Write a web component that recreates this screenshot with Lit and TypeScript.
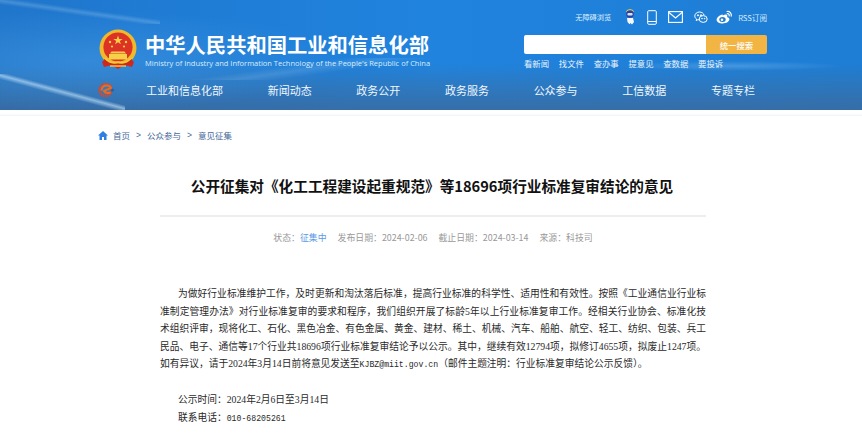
import { LitElement, html, css, svg } from "lit";
import { customElement } from "lit/decorators.js";

const emblem = svg`<svg class="emblem" width="40" height="41" viewBox="0 0 40 41">
  <path d="M9 28 L4 33 L6 38 L14 36 L20 40 L26 36 L34 38 L36 33 L31 28Z" fill="#d0281f"/>
  <circle cx="20" cy="19" r="18.5" fill="#f0b92c"/>
  <circle cx="20" cy="18" r="14.6" fill="#dc3325"/>
  <g fill="#f7d04a">
    <path d="M20 6.500l1.200 3.400h3.500l-2.900 2 1.100 3.400-2.900-2.100-2.900 2.100 1.100-3.400-2.900-2h3.500z"/>
    <circle cx="12" cy="13" r="1.200"/><circle cx="28" cy="13" r="1.200"/>
    <circle cx="14" cy="17.500" r="1.100"/><circle cx="26" cy="17.500" r="1.100"/>
    <path d="M13.500 22.500h13l1.500 2h-16z"/>
    <rect x="11" y="25" width="18" height="5.500"/>
  </g>
  <path d="M6 30 Q20 39 34 30 L34 34 Q20 41 6 34Z" fill="#c92a1e"/>
  <path d="M7 29 Q13 36 20 33 Q27 36 33 29" fill="none" stroke="#f7c93c" stroke-width="1.600"/>
  <path d="M12 37h16" stroke="#f7c93c" stroke-width="1.400"/>
</svg>`;

const eLogo = svg`<svg width="17" height="16" viewBox="0 0 17 16">
  <circle cx="7.500" cy="8" r="6" fill="none" stroke="#e2451f" stroke-width="2.600" stroke-dasharray="1.400 .7"/>
  <path d="M3.500 8.500 Q4 3.500 8.500 3.500 Q12 3.500 13 6 L6 9 Q7.500 12 12.500 10.500" fill="none" stroke="#ef6a1c" stroke-width="2"/>
  <circle cx="14.500" cy="8" r="1.600" fill="#1b62b5"/>
</svg>`;

const robot = svg`<svg width="12" height="16" viewBox="0 0 12 16">
  <path d="M2 3 L3 1 L6 0 L9 1 L10 3Z" fill="#d9cf5c"/>
  <circle cx="6" cy="5" r="3.800" fill="#31409c"/>
  <rect x="3.400" y="4" width="5.200" height="2.600" rx="1" fill="#cfe6ff"/>
  <path d="M3 9h6l1 4-2 2.600-1.500-1.600-1 1.200L3.500 13z" fill="#f4f8ff"/>
</svg>`;
const phone = svg`<svg width="10" height="15" viewBox="0 0 10 15" fill="none" stroke="#fff" stroke-width="1">
  <rect x=".7" y=".7" width="8.600" height="13.600" rx="1"/><path d="M.7 11.500h8.600"/>
</svg>`;
const mail = svg`<svg width="15" height="12" viewBox="0 0 15 12" fill="none" stroke="#fff" stroke-width="1.100">
  <rect x=".6" y=".6" width="13.800" height="10.800"/><path d="M1 1.500 L7.500 7 L14 1.500"/>
</svg>`;
const wechat = svg`<svg width="14" height="13" viewBox="0 0 14 13" fill="none" stroke="#fff" stroke-width="1">
  <path d="M5.500 1C3 1 .8 2.700.8 5c0 1.300.7 2.400 1.800 3.100L2.200 9.600l1.700-.9c.5.1 1 .2 1.600.2"/>
  <path d="M5.500 1c2.200 0 4.100 1.300 4.600 3.100"/>
  <ellipse cx="9.200" cy="8" rx="4" ry="3.400"/>
  <circle cx="4" cy="4.300" r=".6" fill="#fff"/><circle cx="7" cy="4.300" r=".6" fill="#fff"/>
  <circle cx="8" cy="7.600" r=".4" fill="#fff"/><circle cx="10.600" cy="7.600" r=".4" fill="#fff"/>
</svg>`;
const weibo = svg`<svg class="weibo" width="17" height="14" viewBox="0 0 17 14">
  <path fill="#fff" d="M6.700 4.400C3.500 5 .6 7.500.6 9.700c0 2.200 2.800 3.800 6 3.800 3.700 0 6.800-2 6.800-4.200 0-1.400-1.300-1.900-2-2.100-.4-.1-.1-1.100-.1-1.600-.3-1.500-2.500-1.200-4.600-.2z"/>
  <ellipse cx="6.500" cy="9.500" rx="3.200" ry="2.500" fill="#1f79cd"/>
  <circle cx="6" cy="9.800" r="1.300" fill="#fff"/>
  <path d="M11 1.500c2.600-.5 5 1.800 4.200 4.700M11.300 3.700c1.300-.2 2.200.9 1.900 2.100" fill="none" stroke="#fff" stroke-width="1.200" stroke-linecap="round"/>
</svg>`;
const home = svg`<svg width="10" height="9" viewBox="0 0 10 9"><path fill="#2f7fe3" d="M5 0 L10 4.600 H8.500 V9 H6 V6 H4 V9 H1.500 V4.600 H0Z"/></svg>`;

@customElement("app-root")
export class AppRoot extends LitElement {
  static styles = css`
    :host { display: block; width: 862px; height: 441px; overflow: hidden; background: #fff;
      font-family: "Noto Sans CJK SC", "Liberation Sans", sans-serif; }
    .header { height: 110px; color: #fff; display: flex; flex-direction: column; box-sizing: border-box;
      background:
        linear-gradient(15deg, rgba(200,230,250,0) 44%, rgba(200,230,250,.6) 50%, rgba(200,230,250,0) 55%) 0 74px/125px 36px no-repeat,
        linear-gradient(8deg, rgba(200,230,250,0) 42%, rgba(200,230,250,.22) 50%, rgba(200,230,250,0) 58%) 0 0/160px 24px no-repeat,
        linear-gradient(172deg, rgba(200,230,250,0) 42%, rgba(200,230,250,.14) 50%, rgba(200,230,250,0) 58%) 100px 58px/420px 22px no-repeat,
        radial-gradient(ellipse 110px 5px at 85% 60%, rgba(170,215,250,.28), rgba(170,215,250,0)),
        radial-gradient(ellipse 260px 50px at 10% 55%, rgba(90,170,235,.35), rgba(90,170,235,0)),
        linear-gradient(180deg, rgba(60,110,160,0) 58%, rgba(60,110,160,.45) 78%, rgba(60,105,155,.8) 100%),
        linear-gradient(90deg, #2076cb 0%, #1f7dd6 25%, #2083de 50%, #1e7dd4 100%); }
    .top { display: flex; padding-left: 98px; height: 78px; }
    .brand { width: 426px; display: flex; gap: 7px; padding-top: 29px; box-sizing: border-box; }
    .emblem { flex: none; margin-left: 0; }
    .names { margin-top: 3px; margin-left: 0; }
    .cn { font-size: 20.300px; line-height: 24px; font-weight: 700; white-space: nowrap; }
    .en { font-family: "Open Sans", "Liberation Sans", sans-serif; font-size: 7.500px; line-height: 10px; margin-top: 2px; white-space: nowrap; color: #d8ecfb; }
    .tools { width: 243px; }
    .icons { height: 34px; box-sizing: border-box; display: flex; justify-content: flex-end; align-items: center; gap: 11px; font-size: 7.200px; }
    .icons .access { margin-right: 2px; color: #dff0ff; }
    .icons .weibo { margin-left: -3px; }
    .icons .rss { margin-left: -6px; color: #d8ebfb; font-size: 7.600px; }
    .search { display: flex; height: 19px; margin-top: 1px; }
    .search .box { flex: 1; background: #fff; border-radius: 2px 0 0 2px; }
    .search .btn { width: 61px; background: #f2b544; border-radius: 0 2px 2px 0; font-size: 8.400px; font-weight: 500; display: flex; align-items: center; justify-content: center; }
    .quick { display: flex; gap: 9.700px; margin-top: 3px; font-size: 8.400px; line-height: 12px; color: #e8f4fd; }
    .nav { display: flex; align-items: center; padding-left: 98px; height: 24px; }
    .nav svg { margin-right: 31px; flex: none; }
    .items { display: flex; gap: 44.670px; font-size: 11px; color: #f1f8fe; white-space: nowrap; }
    .shade { height: 6px; background: linear-gradient(180deg, #fff 0 55%, #f1f5f9 100%); }
    .crumbs { display: flex; align-items: center; height: 12px; margin: 13px 0 0 98px; font-size: 8.500px; color: #46699a; }
    .crumbs svg { margin-right: 5px; }
    .crumbs .sep { margin: 0 6px; font-family: "Liberation Sans", sans-serif; }
    h1 { margin: 35px 0 0; padding-left: 2px; text-align: center; font-size: 14.650px; line-height: 20px; font-weight: 700; color: #111; }
    .rule { height: 2px; background: #eeeeee; margin: 19px 156px 0 160px; }
    .meta { display: flex; justify-content: center; gap: 11px; margin-top: 14px; padding-left: 4px; font-size: 8.900px; line-height: 13px; color: #999; }
    .meta .hot { color: #5a9ae6; }
    .article { margin: 41px 156px 0 160px; font-family: "Liberation Serif", "Noto Sans CJK SC", serif; font-size: 9.740px; line-height: 17.500px; color: #2a2a2a; text-align: justify; }
    .article p { margin: 0; }
    .article .ind { text-indent: 18px; }
    .article .gap { margin-top: 17.500px; }
    .mono { font-family: "Liberation Mono", monospace; font-size: 8.200px; }
  `;

  render() {
    return html`
      <div class="header">
        <div class="top">
          <div class="brand">
            ${emblem}
            <div class="names">
              <div class="cn">中华人民共和国工业和信息化部</div>
              <div class="en">Ministry of Industry and Information Technology of the People's Republic of China</div>
            </div>
          </div>
          <div class="tools">
            <div class="icons">
              <span class="access">无障碍浏览</span>
              ${robot}${phone}${mail}${wechat}${weibo}
              <span class="rss">RSS订阅</span>
            </div>
            <div class="search"><div class="box"></div><div class="btn">统一搜索</div></div>
            <div class="quick"><span>看新闻</span><span>找文件</span><span>查办事</span><span>提意见</span><span>查数据</span><span>要投诉</span></div>
          </div>
        </div>
        <div class="nav">
          ${eLogo}
          <div class="items"><span>工业和信息化部</span><span>新闻动态</span><span>政务公开</span><span>政务服务</span><span>公众参与</span><span>工信数据</span><span>专题专栏</span></div>
        </div>
      </div>
      <div class="shade"></div>
      <div class="crumbs">${home}<span>首页</span><span class="sep">&gt;</span><span>公众参与</span><span class="sep">&gt;</span><span>意见征集</span></div>
      <h1>公开征集对《化工工程建设起重规范》等18696项行业标准复审结论的意见</h1>
      <div class="rule"></div>
      <div class="meta"><span>状态：<span class="hot">征集中</span></span><span>发布日期：2024-02-06</span><span>截止日期：2024-03-14</span><span>来源：科技司</span></div>
      <div class="article">
        <p class="ind">为做好行业标准维护工作，及时更新和淘汰落后标准，提高行业标准的科学性、适用性和有效性。按照《工业通信业行业标准制定管理办法》对行业标准复审的要求和程序，我们组织开展了标龄5年以上行业标准复审工作。经相关行业协会、标准化技术组织评审，现将化工、石化、黑色冶金、有色金属、黄金、建材、稀土、机械、汽车、船舶、航空、轻工、纺织、包装、兵工民品、电子、通信等17个行业共18696项行业标准复审结论予以公示。其中，继续有效12794项，拟修订4655项，拟废止1247项。如有异议，请于2024年3月14日前将意见发送至<span class="mono">KJBZ@miit.gov.cn</span>（邮件主题注明：行业标准复审结论公示反馈）。</p>
        <p class="ind gap">公示时间：2024年2月6日至3月14日</p>
        <p class="ind">联系电话：<span class="mono">010-68205261</span></p>
      </div>
    `;
  }
}
